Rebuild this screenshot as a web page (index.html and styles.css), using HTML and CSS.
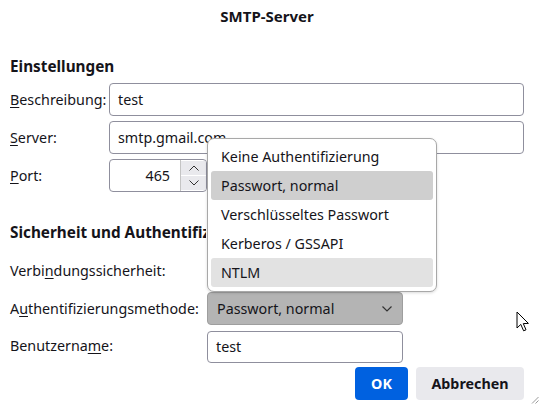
FILE: index.html
```html
<!DOCTYPE html>
<html lang="de">
<head>
<meta charset="utf-8">
<title>SMTP-Server</title>
<link rel="stylesheet" href="styles.css">
</head>
<body>
<div class="dialog">
  <div class="title">SMTP-Server</div>

  <div class="section-head">Einstellungen</div>
  <div class="grid grid-1">
    <label class="lbl"><u>B</u>eschreibung:</label>
    <div class="field">test</div>
    <label class="lbl"><u>S</u>erver:</label>
    <div class="field">smtp.gmail.com</div>
    <label class="lbl"><u>P</u>ort:</label>
    <div class="port">
      <div class="port-num">465</div>
      <div class="spin">
        <div class="spin-btn"><svg width="12" height="8" viewBox="0 0 12 8"><path d="M1.5 6.5 L6 2 L10.5 6.5" fill="none" stroke="#333" stroke-width="1"/></svg></div>
        <div class="spin-btn"><svg width="12" height="8" viewBox="0 0 12 8"><path d="M1.5 1.5 L6 6 L10.5 1.5" fill="none" stroke="#333" stroke-width="1"/></svg></div>
      </div>
    </div>
  </div>

  <div class="section-head sec2">Sicherheit und Authentifizierung</div>
  <div class="grid grid-2">
    <label class="lbl">Verbi<u>n</u>dungssicherheit:</label>
    <div class="select"></div>
    <label class="lbl">A<u>u</u>thentifizierungsmethode:</label>
    <div class="select open">
      <span>Passwort, normal</span>
      <svg width="12" height="8" viewBox="0 0 12 8"><path d="M1.5 1.5 L6 6 L10.5 1.5" fill="none" stroke="#333" stroke-width="1.2"/></svg>
    </div>
    <label class="lbl">Benutzerna<u>m</u>e:</label>
    <div class="field">test</div>
  </div>

  <div class="buttons">
    <div class="btn ok">OK</div>
    <div class="btn cancel">Abbrechen</div>
  </div>

  <div class="popup">
    <div class="item">Keine Authentifizierung</div>
    <div class="item selected">Passwort, normal</div>
    <div class="item">Verschlüsseltes Passwort</div>
    <div class="item">Kerberos / GSSAPI</div>
    <div class="item hover">NTLM</div>
  </div>

  <svg class="cursor" width="14" height="22" viewBox="0 0 14 22">
    <path d="M1 1 L1 17 L4.8 13.4 L7.6 19.8 L10 18.8 L7.3 12.6 L12.4 12.4 Z" fill="#fff" stroke="#000" stroke-width="1" stroke-linejoin="round"/>
  </svg>
  <svg class="grip" width="9" height="9" viewBox="0 0 9 9">
    <path d="M8.5 2 L2 8.5 M8.5 5.5 L5.5 8.5" stroke="#9a9a9a" stroke-width="1"/>
  </svg>
</div>
</body>
</html>
```
FILE: styles.css
```css
* { box-sizing: border-box; }
html, body {
  margin: 0;
  padding: 0;
  background: #fff;
}
body {
  font-family: "Noto Sans", "Open Sans", sans-serif;
  font-size: 14.3px;
  color: #15141a;
  width: 539px;
  height: 404px;
  overflow: hidden;
}
.dialog {
  position: relative;
  width: 539px;
  height: 404px;
  padding: 0 15px 0 10px;
}
.title {
  text-align: center;
  font-weight: bold;
  font-size: 15px;
  height: 32px;
  line-height: 32px;
}
.section-head {
  font-weight: bold;
  font-size: 15.3px;
  height: 20px;
  line-height: 20px;
  margin-top: 24px;
  white-space: nowrap;
}
.sec2 {
  margin-top: 30px;
  overflow: hidden;
  width: 196px;
}
.grid {
  display: grid;
  align-items: center;
}
.grid-1 {
  grid-template-columns: 99px 1fr;
  row-gap: 5px;
  margin-top: 7px;
}
.grid-2 {
  grid-template-columns: 197px 196px;
  grid-template-rows: 33px 33px 32px;
  row-gap: 5px;
  margin-top: 12px;
}
.lbl {
  white-space: nowrap;
  line-height: 20px;
}
.lbl u { text-decoration-thickness: 1px; text-underline-offset: 2px; }
.field {
  height: 33px;
  border: 1px solid #8f8f9d;
  border-radius: 4px;
  padding: 0 8px;
  line-height: 31px;
  background: #fff;
  white-space: nowrap;
}
.port {
  display: flex;
  width: 98px;
  height: 33px;
  border: 1px solid #8f8f9d;
  border-radius: 4px;
  overflow: hidden;
}
.port-num {
  flex: 1;
  text-align: right;
  padding-right: 10px;
  line-height: 31px;
}
.spin {
  width: 26px;
  display: flex;
  flex-direction: column;
  gap: 1px;
  padding: 1px 0 1px 0;
  border-left: 1px solid #c4c4c4;
}
.spin-btn {
  flex: 1;
  background: #e9e9ed;
  display: flex;
  align-items: center;
  justify-content: center;
}
.select {
  height: 33px;
  border: 1px solid #8f8f9d;
  border-radius: 4px;
  padding: 0 9px 0 9px;
  display: flex;
  align-items: center;
  justify-content: space-between;
  background: #e9e9ed;
}
.select.open {
  background: #b4b4b4;
  border-color: #9e9e9e;
}
.grid-2 .field { height: 32px; margin-top: 2px; line-height: 30px; }
.buttons {
  display: flex;
  justify-content: flex-end;
  gap: 8px;
  margin-top: 5px;
}
.btn {
  height: 33px;
  line-height: 33px;
  border-radius: 4px;
  font-weight: bold;
  text-align: center;
}
.ok {
  width: 53px;
  background: #0061e0;
  color: #fff;
}
.cancel {
  width: 108px;
  background: #e9e9ed;
}
.popup {
  position: absolute;
  left: 207px;
  top: 138px;
  width: 230px;
  height: 154px;
  background: #fff;
  border: 1px solid #a8a8a8;
  border-radius: 7px;
  padding: 3px 3px;
  box-shadow: 0 1px 3px rgba(0,0,0,0.15);
}
.item {
  height: 29px;
  line-height: 29px;
  padding-left: 10px;
  border-radius: 3px;
  white-space: nowrap;
}
.item.selected { background: #cfcfcf; }
.item.hover { background: #e2e2e2; }
.cursor {
  position: absolute;
  left: 516px;
  top: 311px;
}
.grip {
  position: absolute;
  right: 0;
  bottom: 0;
}
```
